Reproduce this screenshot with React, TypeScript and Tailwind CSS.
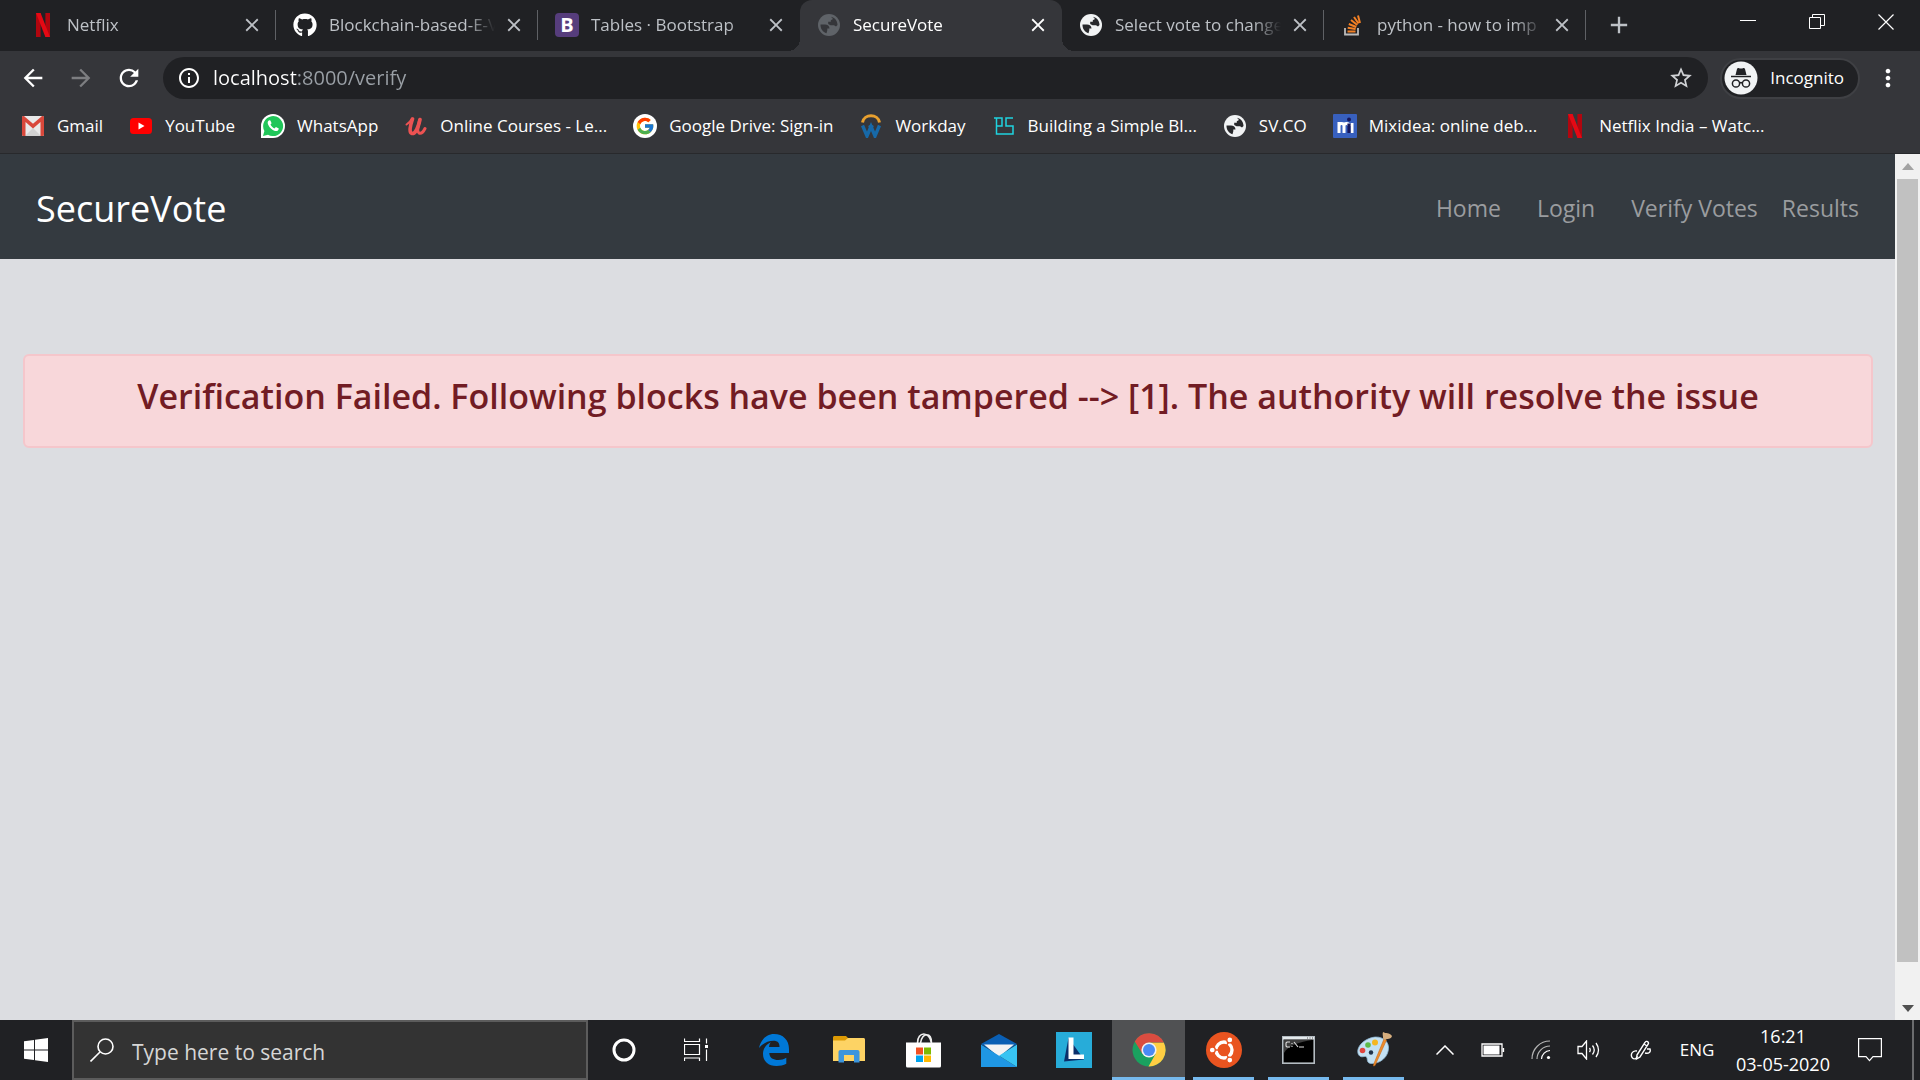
import React from "react";
import { FaGithub } from "react-icons/fa";
import { FcGoogle } from "react-icons/fc";
import { MdClose, MdArrowBack, MdArrowForward, MdRefresh, MdInfoOutline, MdStarBorder, MdMoreVert, MdAdd } from "react-icons/md";

function NetflixIcon() {
  return (
    <svg viewBox="0 0 14 24" className="h-6 w-3.5">
      <path d="M0 0h4.6v24H0zM9.4 0H14v24H9.4z" fill="#b1060f" />
      <path d="M0 0h4.6L14 24H9.4z" fill="#e50914" />
    </svg>
  );
}

function BootstrapIcon() {
  return (
    <span className="flex size-6 items-center justify-center rounded-[4px] bg-[#563d7c] text-xl font-bold leading-6 text-white">B</span>
  );
}

function StackIcon() {
  return (
    <svg viewBox="0 0 20 24" className="h-6 w-5" fill="none">
      <path d="M2 15v6.500h13V15" stroke="#bcbbbb" strokeWidth="1.800" />
      <path d="M4.500 18.500h8M4.700 14.800l7.900 1.200M5.800 11l7.500 3M8 7l6.300 5M11 4l4.500 6.500M15 2.500l2 7.500" stroke="#f48024" strokeWidth="2" />
    </svg>
  );
}

function GmailIcon() {
  return (
    <svg viewBox="0 0 22 20" className="w-[22px]">
      <rect width="22" height="20" rx="1.500" fill="#e9e9e9" />
      <path d="M3 20l8-8 8 8z" fill="#d2d2d2" />
      <path d="M0 1.500V18.500A1.500 1.500 0 0 0 1.500 20H3.500V6L11 12.500 18.500 6V20h2a1.500 1.500 0 0 0 1.500-1.500v-17C22 .3 20.500-.4 19.500.4L11 7.800 2.500.4C1.500-.4 0 .3 0 1.500z" fill="#d9483b" />
    </svg>
  );
}

function YouTubeIcon() {
  return (
    <svg viewBox="0 0 22 16" className="w-[22px]">
      <rect width="22" height="16" rx="3.500" fill="#f00" />
      <path d="M8.500 4.500v7l6-3.500z" fill="#fff" />
    </svg>
  );
}

function WhatsAppIcon() {
  return (
    <svg viewBox="0 0 24 24" className="size-6">
      <path d="M0 24V12A12 12 0 1 1 12 24z" fill="#fff" />
      <path d="M2 22l1.400-5A10 10 0 1 1 7 20.700z" fill="#20c659" />
      <path d="M8.200 6.200c-1.500.8-2 2.500-1 4.500 1.500 3.200 3.500 5 6.800 6.200 2 .6 3.700-.6 3.800-2.500l-2.900-1.500-1.400 1.500c-2-.8-3.100-1.900-4-3.800l1.100-1.400-1.200-2.800z" fill="#fff" />
    </svg>
  );
}

function UdemyIcon() {
  return (
    <svg viewBox="0 0 22 20" className="w-[22px]" fill="none" stroke="#ec5252" strokeLinecap="round">
      <path d="M1.500 8.500C4 7 6 4.500 7 2.500" strokeWidth="2" />
      <path d="M7.500 3C5.500 9 3.500 16.500 7 17.500c3.500.5 6.500-7 8-14" strokeWidth="3.600" />
      <path d="M14.500 4.500c-1.500 6-2.500 11.500-.5 12.500 2 .8 4.500-1.500 6-4.500" strokeWidth="3" />
    </svg>
  );
}

function GoogleIcon() {
  return (
    <span className="flex size-6 items-center justify-center rounded-full bg-white">
      <FcGoogle className="size-5" />
    </span>
  );
}

function WorkdayIcon() {
  return (
    <svg viewBox="0 0 20 24" className="h-6 w-5" fill="none">
      <path d="M1.500 8.500C3-.500 17-.500 18.500 8.500" stroke="#e8a02f" strokeWidth="3" />
      <path d="M1.500 11.500L6 22l4-9.500L14 22l4.500-10.500" stroke="#1769a8" strokeWidth="3.400" />
      <path d="M8 11.500l2 4 2-4" stroke="#1769a8" strokeWidth="2" />
    </svg>
  );
}

function PsIcon() {
  return (
    <svg viewBox="0 0 20 18" className="w-5" fill="none" stroke="#1fd3e0" strokeWidth="1.500">
      <path d="M0 1h8v8H2.500M2.500 1v16H19V9h-7V1h7" />
    </svg>
  );
}

function MixideaIcon() {
  return (
    <svg viewBox="0 0 24 24" className="size-6">
      <rect width="24" height="24" rx="1" fill="#3860be" />
      <path d="M6 19V8M6 12c0-3.500 5-3.500 5 0v7M11 12c0-3.500 5-3.500 5 0M19 9v10" stroke="#fff" strokeWidth="3" fill="none" />
      <path d="M16 9.500V19" stroke="#17175c" strokeWidth="3.200" />
      <circle cx="16" cy="5.500" r="2" fill="#17175c" />
    </svg>
  );
}

function Globe({ dim }: { dim?: boolean }) {
  return (
    <svg viewBox="0 0 22 22" className={dim ? "size-[22px] text-[#5f6368]" : "size-[22px] text-[#f1f3f4]"}>
      <circle cx="11" cy="11" r="11" fill="currentColor" />
      <g fill={dim ? "#35363a" : "#27282b"}>
        <path d="M2.500 10.500H7c2.500 0 4.500 1.500 4.500 4H9.300v1.700l-.8 3C5 18.200 2.300 14.800 2.500 10.500z" />
        <path d="M13 2.700c3.700.8 6.500 4 6.500 8.300l-1.500 1.500-2-1.300h-3.500L10.200 10V7.800h2.600V6.200L15 5z" />
      </g>
    </svg>
  );
}

const tabs = [
  { title: "Netflix", icon: <NetflixIcon />, line: true },
  { title: "Blockchain-based-E-V", icon: <FaGithub className="size-6 text-white" />, line: true },
  { title: "Tables · Bootstrap", icon: <BootstrapIcon />, line: false },
  { title: "SecureVote", icon: <Globe dim />, active: true, line: false },
  { title: "Select vote to change", icon: <Globe />, line: true },
  { title: "python - how to imp", icon: <StackIcon />, line: true },
];

function Tab({ title, icon, active, line }: { title: string; icon: React.ReactNode; active?: boolean; line: boolean }) {
  return (
    <div className={active ? "relative flex w-[262px] items-center rounded-t-xl bg-[#35363a] pb-0.5 pl-4 text-white" : "relative flex w-[262px] items-center pb-0.5 pl-4 text-[#bdc1c6]"}>
      {active && (
        <>
          <span className="absolute bottom-0 -left-3 size-3 bg-[radial-gradient(circle_at_top_left,#202124_12px,#35363a_12px)]" />
          <span className="absolute bottom-0 -right-3 size-3 bg-[radial-gradient(circle_at_top_right,#202124_12px,#35363a_12px)]" />
        </>
      )}
      <span className="flex w-[26px] shrink-0 justify-center">{icon}</span>
      <span className="ml-[11px] w-[174px] overflow-hidden whitespace-nowrap text-[17px] [mask-image:linear-gradient(to_right,black_138px,transparent_166px)]">{title}</span>
      <button aria-label={"Close " + title} className="shrink-0"><MdClose className="size-[22px]" /></button>
      {line && <span className="absolute right-0 h-[30px] w-px bg-[#5f6165]" />}
    </div>
  );
}

const bookmarks = [
  { title: "Gmail", icon: <GmailIcon /> },
  { title: "YouTube", icon: <YouTubeIcon /> },
  { title: "WhatsApp", icon: <WhatsAppIcon /> },
  { title: "Online Courses - Le...", icon: <UdemyIcon /> },
  { title: "Google Drive: Sign-in", icon: <GoogleIcon /> },
  { title: "Workday", icon: <WorkdayIcon /> },
  { title: "Building a Simple Bl...", icon: <PsIcon /> },
  { title: "SV.CO", icon: <Globe /> },
  { title: "Mixidea: online deb...", icon: <MixideaIcon /> },
  { title: "Netflix India – Watc...", icon: <NetflixIcon /> },
];

function IncognitoIcon() {
  return (
    <svg viewBox="0 0 34 34" className="size-[34px]">
      <circle cx="17" cy="17" r="16.500" fill="#f1f3f4" />
      <path d="M11.500 14l1.500-6c.3-1 1.200-1.200 2-.8 1.300.5 2.700.5 4 0 .8-.4 1.700-.2 2 .8l1.500 6z" fill="#202124" />
      <path d="M7 15.500h20" stroke="#202124" strokeWidth="1.500" />
      <g fill="none" stroke="#202124" strokeWidth="1.500">
        <circle cx="12" cy="22.500" r="3.600" />
        <circle cx="22" cy="22.500" r="3.600" />
        <path d="M15.600 22c1-.6 1.800-.6 2.800 0" />
      </g>
    </svg>
  );
}

function Browser() {
  return (
    <header className="shrink-0 bg-[#35363a] text-white">
      <div className="flex h-[51px] bg-[#202124] pl-3.5">
        <div className="flex">{tabs.map((t) => <Tab key={t.title} {...t} />)}</div>
        <button aria-label="New tab" className="ml-[19px] pb-0.5"><MdAdd className="size-7 text-[#bdc1c6]" /></button>
        <div className="ml-auto flex pb-2">
          <button aria-label="Minimize" className="flex w-[69px] items-center justify-center">
            <svg viewBox="0 0 16 16" className="size-4" stroke="#fff"><path d="M0 6.500h16" /></svg>
          </button>
          <button aria-label="Restore" className="flex w-[69px] items-center justify-center">
            <svg viewBox="0 0 16 16" className="size-4" fill="none" stroke="#fff"><path d="M.5 3.500h11v11H.5zM3.500 3.500v-3h12v11h-4" /></svg>
          </button>
          <button aria-label="Close window" className="flex w-[69px] items-center justify-center">
            <svg viewBox="0 0 16 16" className="size-4" stroke="#fff" strokeWidth="1.200"><path d="M.5.500l15 15M15.500.500l-15 15" /></svg>
          </button>
        </div>
      </div>
      <div className="flex h-[54px] items-center pr-[18px] pl-[19px]">
        <button aria-label="Back" className="w-12"><MdArrowBack className="size-7" /></button>
        <button aria-label="Forward" className="w-12"><MdArrowForward className="size-7 text-[#7d7e81]" /></button>
        <button aria-label="Reload" className="w-12"><MdRefresh className="size-7" /></button>
        <div className="flex h-[42px] flex-1 items-center rounded-full bg-[#202124] px-3.5">
          <MdInfoOutline className="size-6" />
          <input
            aria-label="Address"
            defaultValue="localhost:8000/verify"
            className="ml-3 flex-1 bg-[linear-gradient(to_right,#fff_84px,#9aa0a6_84px)] bg-clip-text text-xl text-transparent outline-none"
          />
          <button aria-label="Bookmark this page"><MdStarBorder className="size-[26px] text-[#d0d2d5]" /></button>
        </div>
        <button className="ml-3 flex h-[41px] items-center gap-3 rounded-full border-2 border-[#3f4044] bg-[#202124] pr-3.5 pl-0.5 text-[17px]">
          <IncognitoIcon />
          Incognito
        </button>
        <button aria-label="Menu" className="ml-3.5"><MdMoreVert className="size-7" /></button>
      </div>
      <nav className="flex h-[49px] items-center gap-[26px] border-b border-[#28292c] pb-1.5 pl-[21px] text-[17px]">
        {bookmarks.map((b) => (
          <a key={b.title} href="#" className="flex shrink-0 items-center gap-3">
            <span className="flex w-6 justify-center">{b.icon}</span>
            {b.title}
          </a>
        ))}
      </nav>
    </header>
  );
}

function Page() {
  return (
    <div className="flex flex-1 bg-[#dcdde1]">
      <main className="flex-1">
        <nav className="flex h-[105px] items-center justify-between bg-[#343a40] px-9 pt-1">
          <a href="#" className="text-4xl text-white">SecureVote</a>
          <div className="flex text-[23px] text-[#9a9c9f]">
            <a href="#" className="mr-9">Home</a>
            <a href="#" className="mr-9">Login</a>
            <a href="#" className="mr-6">Verify Votes</a>
            <a href="#">Results</a>
          </div>
        </nav>
        <div role="alert" className="mr-[22px] ml-[23px] mt-[95px] rounded-md border-2 border-[#f5c6cb] bg-[#f8d7da] pt-5 pb-[30px]">
          <h2 className="text-center text-[34px] leading-10 font-semibold text-[#721c24]">
            Verification Failed. Following blocks have been tampered --&gt; [1]. The authority will resolve the issue
          </h2>
        </div>
      </main>
      <div className="flex w-[25px] flex-col items-center bg-[#f1f1f1]">
        <svg viewBox="0 0 12 25" className="h-[25px] w-3"><path d="M0 16l6-7 6 7z" fill="#a3a3a3" /></svg>
        <div className="w-[21px] flex-1 bg-[#c1c1c1]" />
        <svg viewBox="0 0 12 58" className="h-[58px] w-3"><path d="M0 43l6 7 6-7z" fill="#505050" /></svg>
      </div>
    </div>
  );
}

function CortanaIcon() {
  return <svg viewBox="0 0 24 24" className="size-6"><circle cx="12" cy="12" r="10" fill="none" stroke="#fff" strokeWidth="3" /></svg>;
}
function TaskViewIcon() {
  return (
    <svg viewBox="0 0 24 24" className="size-6" fill="none" stroke="#fff" strokeWidth="1.200">
      <path d="M.5.500v3h15v-3M.5 6.500h15v10H.5zM.5 23v-3h15v3M22.500.500v5M22.500 11.500v11.500" />
      <path d="M21 7h3v3h-3z" fill="#fff" stroke="none" />
    </svg>
  );
}
function EdgeIcon() {
  return (
    <svg viewBox="0 0 30 32" className="h-8 w-[30px]">
      <path d="M0 14C2 5 8 0 15 0c9 0 15 6 15 15v4H10.300c.2 5 4 7 9 7 3 0 5.500-.8 8-2.200v6C24.500 31.300 21 32 17.500 32 9.500 32 4 27.500 4 20c0-5.500 3-9.500 7.800-11.800-1 1.200-1.600 2.800-1.800 4.800h10.500c.1-4-1.800-6.200-6-6.200C9 6.800 3.500 9.500 0 14z" fill="#0078d7" />
    </svg>
  );
}
function FolderIcon() {
  return (
    <svg viewBox="0 0 32 28" className="h-7 w-8">
      <path d="M0 1.500C0 .6.600 0 1.500 0H13l2.500 2.500L13 5H0z" fill="#dd9a04" />
      <path d="M0 4.500h12l3-2.500h15.500c.9 0 1.500.6 1.500 1.500V25H0z" fill="#fdd364" />
      <path d="M5.500 26.500V16c0-1.200.8-2 2-2h17c1.200 0 2 .8 2 2v10.500H21V19H11v7.500z" fill="#3c95dd" />
    </svg>
  );
}
function StoreIcon() {
  return (
    <svg viewBox="0 0 35 35" className="size-[35px]">
      <path d="M11.500 10c0-12 12-12 14 0M14.500 10c2-11 11-11 11 0" fill="none" stroke="#eee" strokeWidth="1.600" />
      <path d="M0 9.500h35V33a1.500 1.500 0 0 1-1.500 1.500h-32A1.500 1.500 0 0 1 0 33z" fill="#fff" />
      <path d="M10 14.500h7v7h-7z" fill="#f25022" /><path d="M18 14.500h7v7h-7z" fill="#7fba00" />
      <path d="M10 22.500h7v6.500h-7z" fill="#00a4ef" /><path d="M18 22.500h7v6.500h-7z" fill="#ffb900" />
    </svg>
  );
}
function MailIcon() {
  return (
    <svg viewBox="0 0 36 33" className="h-[33px] w-9">
      <path d="M0 10L18 0l18 10-18 12z" fill="#0a5fb4" />
      <path d="M3 10.500h30L18 23z" fill="#f3f3f3" />
      <path d="M0 10.500L36 33H0z" fill="#1f97e4" />
      <path d="M36 10.500L18 21.700 36 33z" fill="#38c4f2" />
    </svg>
  );
}
function LIcon() {
  return (
    <svg viewBox="0 0 36 36" className="size-9">
      <path d="M0 0h36v36H0z" fill="#27acd9" />
      <path d="M12.500 6L8 29.500l20-2z" fill="#0b2f6b" />
      <path d="M12.500 5.500h5V22.500H28v4.500H12.500z" fill="#fff" />
    </svg>
  );
}
function ChromeIcon() {
  return (
    <svg viewBox="0 0 34 34" className="size-[34px]">
      <circle cx="17" cy="17" r="16.500" fill="#1aa15f" />
      <path d="M17 9.500H31.800A16.500 16.500 0 0 1 16.500 33.500L23.500 21z" fill="#ffce43" />
      <path d="M17 9.500H31.800A16.500 16.500 0 0 0 2.800 8.500L10.500 21z" fill="#da4c40" />
      <circle cx="17" cy="17" r="7.600" fill="#f1f1f1" />
      <circle cx="17" cy="17" r="6" fill="#4a8af4" />
    </svg>
  );
}
function UbuntuIcon() {
  return (
    <svg viewBox="0 0 36 36" className="size-9">
      <circle cx="18" cy="18" r="18" fill="#e95420" />
      <circle cx="18" cy="18" r="8" fill="none" stroke="#fff" strokeWidth="3.400" />
      <path d="M18 18H6M18 18l6-10.400M18 18l6 10.400" stroke="#e95420" strokeWidth="1.400" />
      <g fill="#fff" stroke="#e95420" strokeWidth="1.300"><circle cx="6.300" cy="18" r="3" /><circle cx="23.800" cy="7.900" r="3" /><circle cx="23.800" cy="28.100" r="3" /></g>
    </svg>
  );
}
function CmdIcon() {
  return (
    <svg viewBox="0 0 33 28" className="h-7 w-[33px]">
      <rect x=".8" y=".8" width="31.400" height="26.400" fill="#000" stroke="#b4bcc2" strokeWidth="1.600" />
      <path d="M1 1h31v2.500H1z" fill="#e4e9ec" />
      <path d="M2 4h28C18 6 6 9 2 17z" fill="#3c3c3c" />
      <path d="M8 6H5L4 7v3l1 1h3M10 7v1M10 10v1M12 6l4 5M17 11h5" stroke="#ddd" fill="none" strokeWidth="1.100" />
      <path d="M25 2h1M27.500 2h1M30 2h1" stroke="#555" />
    </svg>
  );
}
function PaintIcon() {
  return (
    <svg viewBox="0 0 36 36" className="size-9">
      <path d="M12 7C22 2 32 7 32.500 15 33 25 24 32 15 31.500c-4-.3-3.500-3.500-4-5.500-.8-3-4-.5-6.500-1.500C-.5 22 1 12 12 7z" fill="#c3e0f2" stroke="#8eb9d6" strokeWidth=".8" />
      <circle cx="6.500" cy="18.500" r="2.800" fill="#e0453e" /><circle cx="12" cy="13" r="2.800" fill="#5dba48" /><circle cx="19" cy="10.500" r="3" fill="#f5b61f" /><circle cx="15" cy="20.500" r="2.200" fill="#1f3148" />
      <path d="M28 7l2.500 1L19 33.500l-1.500.5.300-2z" fill="#ef8c2a" stroke="#c2661a" strokeWidth=".6" />
      <path d="M27 0c3 2 6 0 9 4-1 4-5 2-7 4l-2-1.500c.500-2-1-4 0-6.500z" fill="#d6ae7e" />
    </svg>
  );
}

const apps = [
  { name: "Edge", icon: <EdgeIcon /> },
  { name: "File Explorer", icon: <FolderIcon /> },
  { name: "Store", icon: <StoreIcon /> },
  { name: "Mail", icon: <MailIcon /> },
  { name: "L", icon: <LIcon /> },
  { name: "Chrome", icon: <ChromeIcon />, active: true },
  { name: "Ubuntu", icon: <UbuntuIcon />, open: true },
  { name: "Command Prompt", icon: <CmdIcon />, open: true },
  { name: "Paint", icon: <PaintIcon />, open: true },
];

function Taskbar() {
  return (
    <footer className="flex h-[60px] shrink-0 items-stretch bg-[#202124] text-white">
      <button aria-label="Start" className="flex w-[72px] items-center justify-center">
        <svg viewBox="0 0 24 24" className="size-6" fill="#fff"><path d="M0 3.300L10 2v9.500H0zM11 1.800L24 0v11.500H11zM0 12.500h10V22L0 20.700zM11 12.500h13V24l-13-1.800z" /></svg>
      </button>
      <label className="flex w-[516px] items-center border-2 border-[#5c5c5c] bg-[#333333] pl-4">
        <svg viewBox="0 0 24 24" className="size-6" fill="none" stroke="#fff" strokeWidth="1.600"><circle cx="15.500" cy="8.500" r="7.500" /><path d="M10 14L.5 23.500" /></svg>
        <input aria-label="Search" placeholder="Type here to search" className="ml-[18px] flex-1 pt-1.5 text-[21px] outline-none placeholder:text-[#d6d6d6]" />
      </label>
      <button aria-label="Cortana" className="flex w-[72px] items-center justify-center"><CortanaIcon /></button>
      <button aria-label="Task View" className="flex w-[72px] items-center justify-center"><TaskViewIcon /></button>
      <div className="ml-1 flex">
        {apps.map((a) => (
          <button key={a.name} aria-label={a.name} className="flex w-[75px] px-px">
            <span className={a.active ? "relative flex h-full flex-1 items-center justify-center bg-[#505153]" : "relative flex h-full flex-1 items-center justify-center"}>
              {a.icon}
              {a.active && <span className="absolute inset-x-0 bottom-0 h-[3px] bg-[#76b9ed]" />}
              {a.open && <span className="absolute inset-x-1.5 bottom-0 h-[3px] bg-[#76b9ed]" />}
            </span>
          </button>
        ))}
      </div>
      <div className="ml-auto flex items-center">
        <button aria-label="Show hidden icons" className="flex w-12 justify-center"><svg viewBox="0 0 18 10" className="w-[18px]" fill="none" stroke="#fff" strokeWidth="1.500"><path d="M.5 9.500L9 1l8.500 8.500" /></svg></button>
        <button aria-label="Battery" className="flex w-12 justify-center"><svg viewBox="0 0 24 14" className="w-6" fill="none" stroke="#fff" strokeWidth="1.300"><path d="M1 1h20v12H1zM22.500 5v4" /><path d="M2.500 2.500h16v9h-16z" fill="#fff" stroke="none" /></svg></button>
        <button aria-label="Network" className="flex w-12 justify-center"><svg viewBox="0 0 20 20" className="size-5" fill="none" stroke="#fff" strokeWidth="1.200"><path d="M1 19A18 18 0 0 1 19 1M6 19A13 13 0 0 1 19 6" stroke="#b5b5b5" /><path d="M10.500 19A9 9 0 0 1 19 10.500" /><circle cx="17.500" cy="17.500" r="1.600" fill="#fff" stroke="none" /></svg></button>
        <button aria-label="Volume" className="flex w-12 justify-center"><svg viewBox="0 0 24 20" className="h-5 w-6" fill="none" stroke="#fff" strokeWidth="1.300"><path d="M1 6.500h4L9.500 1v18L5 13.500H1zM12.500 8q1.500 2 0 4M15.500 5.500q3.500 4.500 0 9M19 3q5 7 0 14" /></svg></button>
        <button aria-label="Pen" className="flex w-14 justify-center"><svg viewBox="0 0 22 22" className="size-[22px]" fill="none" stroke="#fff" strokeWidth="1.400"><path d="M7 16L15 3.500c1.500-2.500 4.500-.5 3 2L10 18l-3.500 2zM14 5l3 2M7 12c-5-1-7 4-4.500 7 2 2 4.500 0 5-2M15 14c4 1 6-1 5-4h-3" /></svg></button>
        <button className="w-14 text-[17px]">ENG</button>
        <button className="w-[116px] text-center text-lg leading-7">16:21<br />03-05-2020</button>
        <button aria-label="Notifications" className="flex w-[57px] justify-center"><svg viewBox="0 0 24 24" className="size-6" fill="none" stroke="#fff" strokeWidth="1.200"><path d="M.600.600h22.800v18H15l-3.500 4-3.500-4H.600z" /></svg></button>
      </div>
      <div className="ml-3.5 w-2 border-l-2 border-[#6b6c6e]" />
    </footer>
  );
}

export default function App() {
  return (
    <div className="flex h-screen flex-col overflow-hidden font-['Open_Sans',sans-serif]">
      <Browser />
      <Page />
      <Taskbar />
    </div>
  );
}
